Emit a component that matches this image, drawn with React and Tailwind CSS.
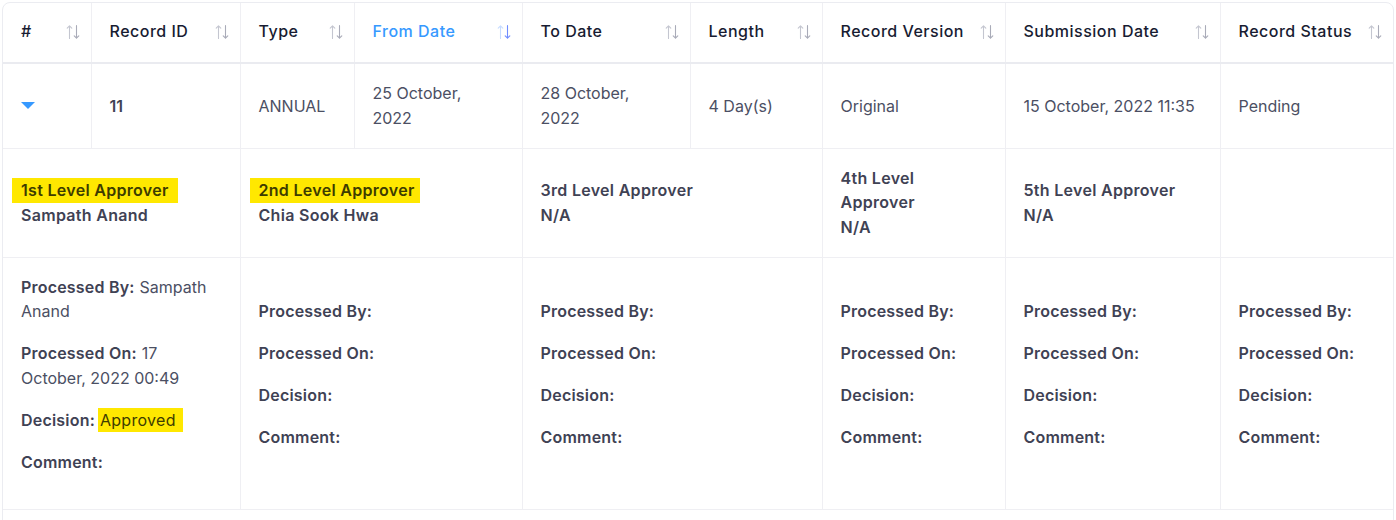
import React from 'react'

const headers = [
  { label: '#' },
  { label: 'Record ID' },
  { label: 'Type' },
  { label: 'From Date', active: true },
  { label: 'To Date' },
  { label: 'Length' },
  { label: 'Record Version' },
  { label: 'Submission Date' },
  { label: 'Record Status', last: true },
]

const approvers = [
  { title: '1st Level Approver', name: 'Sampath Anand', mark: 'first' },
  { title: '2nd Level Approver', name: 'Chia Sook Hwa', mark: 'second' },
  { title: '3rd Level Approver', name: 'N/A' },
  { title: '4th Level Approver', name: 'N/A', narrow: true },
  { title: '5th Level Approver', name: 'N/A' },
]

function SortIcon({ active }) {
  return (
    <svg viewBox="0 0 16 16" fill="none" className="size-[16px] shrink-0" aria-hidden="true">
      <path
        d="M4.5 14.5V1.8M2.2 4.1l2.3-2.3 2.3 2.3"
        stroke={active ? '#c7dcff' : '#c4c6d0'}
        strokeWidth="1.1"
        strokeLinecap="round"
        strokeLinejoin="round"
      />
      <path
        d="M11.5 1.5v12.7M9.2 11.9l2.3 2.3 2.3-2.3"
        stroke={active ? '#6f8cff' : '#a9abb8'}
        strokeWidth="1.1"
        strokeLinecap="round"
        strokeLinejoin="round"
      />
    </svg>
  )
}

function Caret() {
  return (
    <svg viewBox="0 0 14 7" className="h-[7px] w-[14px]" aria-hidden="true">
      <polygon points="0,0 14,0 7,7" fill="#3699ff" />
    </svg>
  )
}

function Field({ label, first, rest, children }) {
  return (
    <p className="mb-[17.5px]">
      <span className="font-semibold tracking-[0.2px] text-[#3f4254]">{label}</span>
      {first ? <span className="ml-[5px]">{first}</span> : null}
      {rest ? <span>{` ${rest}`}</span> : null}
      {children}
    </p>
  )
}

export default function App() {
  return (
    <div className="bg-white p-[2px] font-['Inter',sans-serif] text-[16px] leading-[24.5px] text-[#4b4f63]">
      <div className="w-[1392px] overflow-hidden rounded-lg border border-[#ebecf1]">
        <table className="w-full table-fixed border-collapse">
          <colgroup>
            <col className="w-[88px]" />
            <col className="w-[149px]" />
            <col className="w-[114px]" />
            <col className="w-[168px]" />
            <col className="w-[168px]" />
            <col className="w-[132px]" />
            <col className="w-[183px]" />
            <col className="w-[215px]" />
            <col className="w-[173px]" />
          </colgroup>
          <thead>
            <tr>
              {headers.map((h) => (
                <th
                  key={h.label}
                  className={`h-[60px] border-b-2 border-[#eaebf0] pr-[10px] pb-[2px] pl-[18px] text-left font-medium tracking-[0.5px] ${
                    h.last ? '' : 'border-r border-r-[#efeff3]'
                  } ${h.active ? 'text-[#3699ff]' : 'text-[#181c32]'}`}
                >
                  <div className="flex items-center justify-between gap-2">
                    <span className="whitespace-nowrap">{h.label}</span>
                    <SortIcon active={h.active} />
                  </div>
                </th>
              ))}
            </tr>
          </thead>
          <tbody>
            <tr className="h-[85px] border-b border-[#efeff3]">
              <td className="border-r border-[#efeff3] px-[18px]">
                <Caret />
              </td>
              <td className="border-r border-[#efeff3] px-[18px] font-semibold text-[#3f4254]">11</td>
              <td className="border-r border-[#efeff3] px-[18px]">ANNUAL</td>
              <td className="border-r border-[#efeff3] px-[18px]">
                <span className="block max-w-[110px]">25 October, 2022</span>
              </td>
              <td className="border-r border-[#efeff3] px-[18px]">
                <span className="block max-w-[110px]">28 October, 2022</span>
              </td>
              <td className="border-r border-[#efeff3] px-[18px]">4 Day(s)</td>
              <td className="border-r border-[#efeff3] px-[18px]">Original</td>
              <td className="border-r border-[#efeff3] px-[18px] whitespace-nowrap">15 October, 2022 11:35</td>
              <td className="px-[18px]">Pending</td>
            </tr>

            <tr className="h-[109px] border-b border-[#efeff3]">
              {approvers.map((a, i) => (
                <td
                  key={a.title}
                  colSpan={i < 3 ? 2 : 1}
                  className="border-r border-[#efeff3] px-[18px] font-semibold tracking-[0.3px] text-[#3f4254]"
                >
                  <div className={a.narrow ? 'max-w-[120px]' : ''}>
                    {a.mark === 'first' ? (
                      <span className="-ml-[9px] inline-block bg-[#ffe800] pr-[9px] pl-[9px] text-[#3d3c00]">
                        {a.title}
                      </span>
                    ) : a.mark === 'second' ? (
                      <span className="-ml-[9px] inline-block bg-[#ffe800] pr-[5px] pl-[9px] text-[#3d3c00]">
                        {a.title}
                      </span>
                    ) : (
                      <div>{a.title}</div>
                    )}
                    <div>{a.name}</div>
                  </div>
                </td>
              ))}
              <td className="px-[18px]" />
            </tr>

            <tr className="h-[252px] border-b border-[#efeff3]">
              <td colSpan={2} className="border-r border-[#efeff3] px-[18px]">
                <Field label="Processed By:" first="Sampath" rest="Anand" />
                <Field label="Processed On:" first="17" rest="October, 2022 00:49" />
                <Field label="Decision:">
                  <span className="ml-[3px] inline-block bg-[#ffe800] pr-[7px] pl-[2px] tracking-[0.3px] text-[#3d3c00]">
                    Approved
                  </span>
                </Field>
                <Field label="Comment:" />
              </td>
              {[
                { span: 2 },
                { span: 2 },
                { span: 1 },
                { span: 1 },
                { span: 1, last: true },
              ].map((c, i) => (
                <td
                  key={i}
                  colSpan={c.span}
                  className={`px-[18px] ${c.last ? '' : 'border-r border-[#efeff3]'}`}
                >
                  <Field label="Processed By:" />
                  <Field label="Processed On:" />
                  <Field label="Decision:" />
                  <Field label="Comment:" />
                </td>
              ))}
            </tr>

            <tr className="h-[40px]">
              <td colSpan={9} />
            </tr>
          </tbody>
        </table>
      </div>
    </div>
  )
}
